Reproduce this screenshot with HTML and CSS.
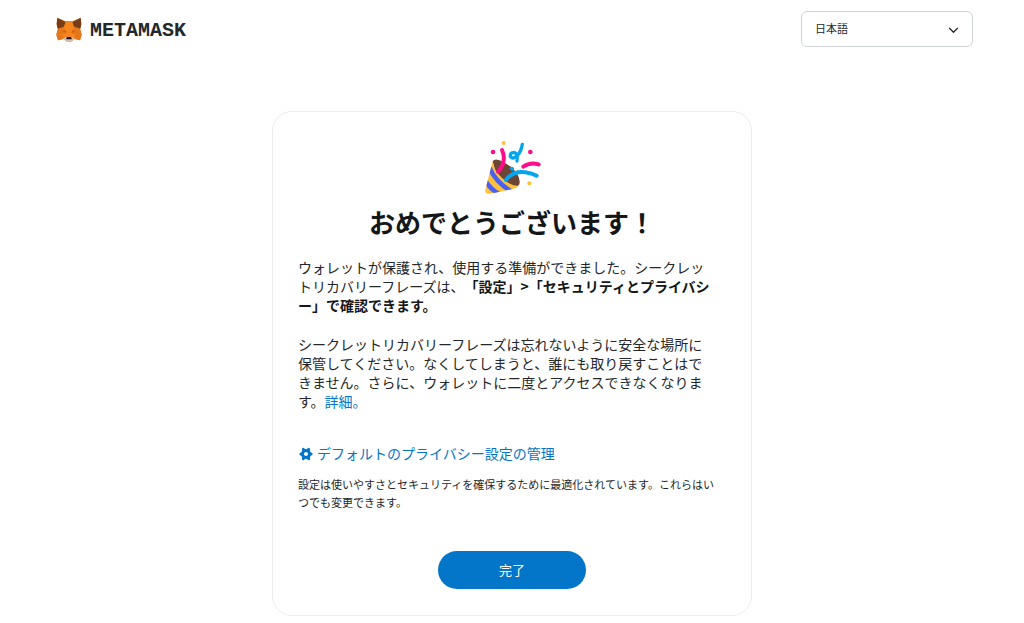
FILE: index.html
```html
<!DOCTYPE html>
<html lang="ja">
<head>
<meta charset="UTF-8">
<meta name="viewport" content="width=device-width, initial-scale=1.0">
<title>MetaMask</title>
<link rel="stylesheet" href="styles.css">
</head>
<body>

<header class="header">
    <a class="logo" href="#">
        <svg class="fox" viewBox="0 0 79 74" aria-hidden="true">
            <path fill="#f6851b" d="M4 2 L28 11 H51 L75 2 L77 22 L73 37 L78 52 L73 70 L57 66 L46 74 H33 L22 66 L6 70 L1 52 L6 37 L2 22Z"/>
            <path fill="#763d16" d="M4 1 L29 14 L24 29 L5 35 L2 20Z"/>
            <path fill="#763d16" d="M75 1 L50 14 L55 29 L74 35 L77 20Z"/>
            <path fill="#e4761b" d="M5 36 L24 30 L31 50 L1 53Z"/>
            <path fill="#e4761b" d="M74 36 L55 30 L48 50 L78 53Z"/>
            <path fill="#cd6116" d="M20 42 L29 39 L32 48Z"/>
            <path fill="#cd6116" d="M59 42 L50 39 L47 48Z"/>
            <path fill="#e2761b" d="M1 53 H21 L22 66 L6 70Z"/>
            <path fill="#e2761b" d="M78 53 H58 L57 66 L73 70Z"/>
            <path fill="#d7c1b3" d="M22 64 L31 60 H48 L57 64 L46 74 H33Z"/>
            <path fill="#161616" d="M33 60 H46 L48 67 H31Z"/>
        </svg>
        <span>METAMASK</span>
    </a>
    <div class="language">
        <select id="language" name="language" aria-label="言語">
            <option value="ja" selected>日本語</option>
            <option value="en">English</option>
        </select>
        <svg class="arrow" viewBox="0 0 12 8" aria-hidden="true">
            <path d="M1 1 L6 6 L11 1"/>
        </svg>
    </div>
</header>

<main class="card">
    <svg class="party" viewBox="40 30 171 165" aria-hidden="true">
        <path fill="#6d4534" d="M66 94 Q71 86 84 90 Q98 94 123 112 Q149 139 147 158 Q145 170 132 170 Q100 158 74 124Z"/>
        <clipPath id="cone">
            <path d="M66 94 Q68 120 94 144 Q118 168 143 168 Q138 174 126 177 L60 191 Q43 194 44 180Z"/>
        </clipPath>
        <g clip-path="url(#cone)">
            <path fill="#ffc139" d="M40 80 H150 V195 H40Z"/>
            <g class="stripes">
                <path d="M56 112 Q74 156 124 186"/>
                <path d="M43 150 Q58 178 92 196"/>
            </g>
        </g>
        <g class="ribbons">
            <path class="pink" d="M94 60 Q103 80 97 101 Q92 116 82 125"/>
            <path class="pink" d="M158 110 Q178 95 204 103"/>
            <path class="blue" d="M106 150 Q128 121 164 127 Q184 130 198 137"/>
            <path class="blue thin" d="M155 43 Q152 66 137 80 Q124 89 119 79 Q118 67 130 67 Q143 70 139 93"/>
        </g>
        <circle fill="#ff0d8a" cx="67" cy="66" r="7"/>
        <circle fill="#ff0d8a" cx="179" cy="66" r="7"/>
        <circle fill="#fbc13b" cx="99" cy="39" r="6"/>
        <circle fill="#fbc13b" cx="176" cy="160" r="6"/>
        <path fill="#02a6ed" d="M116 114 Q123 107 130 114 Q131 122 123 123Z"/>
    </svg>
    <h1>おめでとうございます！</h1>

    <div class="text">
        <p>ウォレットが保護され、使用する準備ができました。シークレットリカバリーフレーズは、<b>「設定」&gt;「セキュリティとプライバシー」で確認できます。</b></p>
        <p>シークレットリカバリーフレーズは忘れないように安全な場所に保管してください。なくしてしまうと、誰にも取り戻すことはできません。さらに、ウォレットに二度とアクセスできなくなります。<a href="#">詳細。</a></p>
    </div>

    <a class="privacy" href="#">
        <svg class="gear" viewBox="0 0 14 14" aria-hidden="true">
            <circle cx="7" cy="7" r="3.6"/>
            <path d="M4.3 2.3 L5 4 M9.7 2.3 L9 4 M1.9 7 H3 M12.1 7 H11 M4.3 11.7 L5 10 M9.7 11.7 L9 10"/>
        </svg>
        <span>デフォルトのプライバシー設定の管理</span>
    </a>
    <p class="note">設定は使いやすさとセキュリティを確保するために最適化されています。これらはいつでも変更できます。</p>

    <button type="button">完了</button>
</main>

</body>
</html>
```

FILE: styles.css
```css
* {
    box-sizing: border-box;
}

body {
    font-family: "Noto Sans CJK JP", sans-serif;
    margin: 0;
    color: #24272a;
    background-color: #ffffff;
    font-size: 14px;
    line-height: 19px;
    text-spacing-trim: space-all;
}

a {
    color: #0376c9;
    text-decoration: none;
}

h1,
p {
    margin: 0;
}

.header {
    display: flex;
    justify-content: space-between;
    align-items: center;
    padding: 11px 51px 0 56px;
}

.logo {
    display: flex;
    align-items: center;
    gap: 8px;
    color: #24272a;
    font-family: "Liberation Mono", monospace;
    font-size: 20px;
    font-weight: bold;
}

.logo span {
    padding-top: 3px;
}

.fox {
    width: 26px;
    height: 25px;
}

/* Language drop-down */
.language {
    position: relative;
    width: 172px;
}

.language select {
    appearance: none;
    display: block;
    width: 100%;
    height: 36px;
    padding: 0 36px 2px 13px;
    border: 1px solid #d0d4d9;
    border-radius: 6px;
    background-color: #ffffff;
    color: #24272a;
    font-family: inherit;
    font-size: 11px;
}

.arrow {
    position: absolute;
    right: 14px;
    top: 16px;
    width: 11px;
    height: 7px;
    fill: none;
    stroke: #24272a;
    stroke-width: 1.6;
    pointer-events: none;
}

.card {
    display: flex;
    flex-direction: column;
    align-items: flex-start;
    max-width: 480px;
    margin: 64px auto 0;
    padding: 28px 25px 26px;
    border: 1px solid #eaecee;
    border-radius: 20px;
}

.party {
    width: 57px;
    height: 55px;
    align-self: center;
}

.stripes {
    fill: none;
    stroke: #4a60f5;
    stroke-width: 14;
}

.ribbons {
    fill: none;
    stroke-width: 12;
    stroke-linecap: round;
}

.pink {
    stroke: #ff0d8a;
}

.blue {
    stroke: #02a6ed;
}

.thin {
    stroke-width: 10;
}

h1 {
    align-self: center;
    margin-top: 7px;
    color: #141618;
    font-size: 26px;
    line-height: 40px;
}

.text {
    display: grid;
    gap: 20px;
    max-width: 418px;
    margin-top: 16px;
    line-break: loose;
}

.text b {
    color: #141618;
}

.privacy {
    display: flex;
    align-items: center;
    gap: 4px;
    margin: 33px 0 12px 1px;
}

.gear {
    width: 14px;
    height: 14px;
    fill: none;
    stroke: #0376c9;
    stroke-width: 3;
    stroke-linecap: round;
}

.note {
    max-width: 420px;
    font-size: 11px;
    line-height: 18px;
}

button {
    align-self: center;
    width: 148px;
    height: 38px;
    margin-top: 40px;
    padding: 0 0 2px;
    border: none;
    border-radius: 19px;
    background-color: #0376c9;
    color: #ffffff;
    font-family: inherit;
    font-size: 13px;
    cursor: pointer;
}
```
